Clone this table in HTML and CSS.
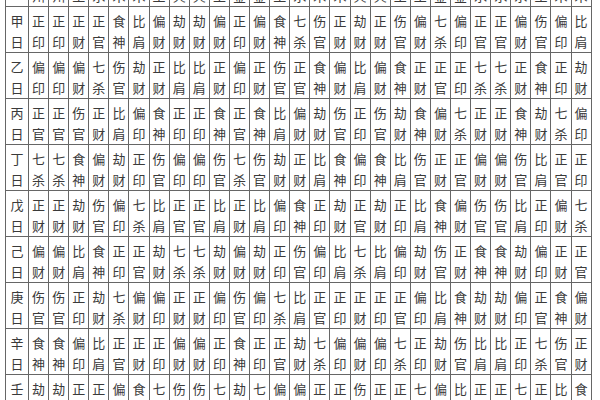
FILE: index.html
```html
<!DOCTYPE html>
<html lang="zh">
<head>
<meta charset="utf-8">
<link rel="stylesheet" href="styles.css">
</head>
<body>
<div class="t">
<div class="c h"></div>
<div class="c">月<br>州</div><div class="c">月<br>州</div><div class="c">丑<br>土</div><div class="c">子<br>水</div><div class="c">寅<br>木</div><div class="c">卯<br>木</div><div class="c">辰<br>土</div><div class="c">巳<br>火</div><div class="c">午<br>火</div><div class="c">未<br>土</div><div class="c">申<br>金</div><div class="c">酉<br>金</div><div class="c">戌<br>土</div><div class="c">亥<br>水</div><div class="c">甲<br>木</div><div class="c">乙<br>木</div><div class="c">丙<br>火</div><div class="c">丁<br>火</div><div class="c">戊<br>土</div><div class="c">己<br>土</div><div class="c">庚<br>金</div><div class="c">辛<br>金</div><div class="c">壬<br>水</div><div class="c">癸<br>水</div><div class="c">子<br>水</div><div class="c">丑<br>土</div><div class="c">寅<br>木</div><div class="c">卯<br>木</div>

<div class="c h">甲<br>日</div>
<div class="c">正<br>印</div><div class="c">正<br>印</div><div class="c">正<br>财</div><div class="c">正<br>官</div><div class="c">食<br>神</div><div class="c">比<br>肩</div><div class="c">偏<br>财</div><div class="c">劫<br>财</div><div class="c">劫<br>财</div><div class="c">偏<br>财</div><div class="c">正<br>印</div><div class="c">偏<br>财</div><div class="c">食<br>神</div><div class="c">七<br>杀</div><div class="c">伤<br>官</div><div class="c">正<br>财</div><div class="c">劫<br>财</div><div class="c">正<br>财</div><div class="c">伤<br>官</div><div class="c">偏<br>财</div><div class="c">七<br>杀</div><div class="c">偏<br>印</div><div class="c">正<br>官</div><div class="c">正<br>官</div><div class="c">偏<br>财</div><div class="c">伤<br>官</div><div class="c">偏<br>印</div><div class="c">比<br>肩</div>

<div class="c h">乙<br>日</div>
<div class="c">偏<br>印</div><div class="c">偏<br>印</div><div class="c">偏<br>财</div><div class="c">七<br>杀</div><div class="c">伤<br>官</div><div class="c">劫<br>财</div><div class="c">正<br>财</div><div class="c">比<br>肩</div><div class="c">比<br>肩</div><div class="c">正<br>财</div><div class="c">偏<br>印</div><div class="c">正<br>财</div><div class="c">伤<br>官</div><div class="c">正<br>官</div><div class="c">食<br>神</div><div class="c">偏<br>财</div><div class="c">比<br>肩</div><div class="c">偏<br>财</div><div class="c">食<br>神</div><div class="c">正<br>财</div><div class="c">正<br>官</div><div class="c">正<br>印</div><div class="c">七<br>杀</div><div class="c">七<br>杀</div><div class="c">正<br>财</div><div class="c">食<br>神</div><div class="c">正<br>印</div><div class="c">劫<br>财</div>

<div class="c h">丙<br>日</div>
<div class="c">正<br>官</div><div class="c">正<br>官</div><div class="c">伤<br>官</div><div class="c">正<br>财</div><div class="c">比<br>肩</div><div class="c">偏<br>印</div><div class="c">食<br>神</div><div class="c">正<br>印</div><div class="c">正<br>印</div><div class="c">食<br>神</div><div class="c">正<br>官</div><div class="c">食<br>神</div><div class="c">比<br>肩</div><div class="c">偏<br>财</div><div class="c">劫<br>财</div><div class="c">伤<br>官</div><div class="c">正<br>印</div><div class="c">伤<br>官</div><div class="c">劫<br>财</div><div class="c">食<br>神</div><div class="c">偏<br>财</div><div class="c">七<br>杀</div><div class="c">正<br>财</div><div class="c">正<br>财</div><div class="c">食<br>神</div><div class="c">劫<br>财</div><div class="c">七<br>杀</div><div class="c">偏<br>印</div>

<div class="c h">丁<br>日</div>
<div class="c">七<br>杀</div><div class="c">七<br>杀</div><div class="c">食<br>神</div><div class="c">偏<br>财</div><div class="c">劫<br>财</div><div class="c">正<br>印</div><div class="c">伤<br>官</div><div class="c">偏<br>印</div><div class="c">偏<br>印</div><div class="c">伤<br>官</div><div class="c">七<br>杀</div><div class="c">伤<br>官</div><div class="c">劫<br>财</div><div class="c">正<br>财</div><div class="c">比<br>肩</div><div class="c">食<br>神</div><div class="c">偏<br>印</div><div class="c">食<br>神</div><div class="c">比<br>肩</div><div class="c">伤<br>官</div><div class="c">正<br>财</div><div class="c">正<br>官</div><div class="c">偏<br>财</div><div class="c">偏<br>财</div><div class="c">伤<br>官</div><div class="c">比<br>肩</div><div class="c">正<br>官</div><div class="c">正<br>印</div>

<div class="c h">戊<br>日</div>
<div class="c">正<br>财</div><div class="c">正<br>财</div><div class="c">劫<br>财</div><div class="c">伤<br>官</div><div class="c">偏<br>印</div><div class="c">七<br>杀</div><div class="c">比<br>肩</div><div class="c">正<br>官</div><div class="c">正<br>官</div><div class="c">比<br>肩</div><div class="c">正<br>财</div><div class="c">比<br>肩</div><div class="c">偏<br>印</div><div class="c">食<br>神</div><div class="c">正<br>印</div><div class="c">劫<br>财</div><div class="c">正<br>官</div><div class="c">劫<br>财</div><div class="c">正<br>印</div><div class="c">比<br>肩</div><div class="c">食<br>神</div><div class="c">偏<br>财</div><div class="c">伤<br>官</div><div class="c">伤<br>官</div><div class="c">比<br>肩</div><div class="c">正<br>印</div><div class="c">偏<br>财</div><div class="c">七<br>杀</div>

<div class="c h">己<br>日</div>
<div class="c">偏<br>财</div><div class="c">偏<br>财</div><div class="c">比<br>肩</div><div class="c">食<br>神</div><div class="c">正<br>印</div><div class="c">正<br>官</div><div class="c">劫<br>财</div><div class="c">七<br>杀</div><div class="c">七<br>杀</div><div class="c">劫<br>财</div><div class="c">偏<br>财</div><div class="c">劫<br>财</div><div class="c">正<br>印</div><div class="c">伤<br>官</div><div class="c">偏<br>印</div><div class="c">比<br>肩</div><div class="c">七<br>杀</div><div class="c">比<br>肩</div><div class="c">偏<br>印</div><div class="c">劫<br>财</div><div class="c">伤<br>官</div><div class="c">正<br>财</div><div class="c">食<br>神</div><div class="c">食<br>神</div><div class="c">劫<br>财</div><div class="c">偏<br>印</div><div class="c">正<br>财</div><div class="c">正<br>官</div>

<div class="c h">庚<br>日</div>
<div class="c">伤<br>官</div><div class="c">伤<br>官</div><div class="c">正<br>印</div><div class="c">劫<br>财</div><div class="c">七<br>杀</div><div class="c">偏<br>财</div><div class="c">偏<br>印</div><div class="c">正<br>财</div><div class="c">正<br>财</div><div class="c">偏<br>印</div><div class="c">伤<br>官</div><div class="c">偏<br>印</div><div class="c">七<br>杀</div><div class="c">比<br>肩</div><div class="c">正<br>官</div><div class="c">正<br>印</div><div class="c">正<br>财</div><div class="c">正<br>印</div><div class="c">正<br>官</div><div class="c">偏<br>印</div><div class="c">比<br>肩</div><div class="c">食<br>神</div><div class="c">劫<br>财</div><div class="c">劫<br>财</div><div class="c">偏<br>印</div><div class="c">正<br>官</div><div class="c">食<br>神</div><div class="c">偏<br>财</div>

<div class="c h">辛<br>日</div>
<div class="c">食<br>神</div><div class="c">食<br>神</div><div class="c">偏<br>印</div><div class="c">比<br>肩</div><div class="c">正<br>官</div><div class="c">正<br>财</div><div class="c">正<br>印</div><div class="c">偏<br>财</div><div class="c">偏<br>财</div><div class="c">正<br>印</div><div class="c">食<br>神</div><div class="c">正<br>印</div><div class="c">正<br>官</div><div class="c">劫<br>财</div><div class="c">七<br>杀</div><div class="c">偏<br>印</div><div class="c">偏<br>财</div><div class="c">偏<br>印</div><div class="c">七<br>杀</div><div class="c">正<br>印</div><div class="c">劫<br>财</div><div class="c">伤<br>官</div><div class="c">比<br>肩</div><div class="c">比<br>肩</div><div class="c">正<br>印</div><div class="c">七<br>杀</div><div class="c">伤<br>官</div><div class="c">正<br>财</div>

<div class="c h">壬<br>日</div>
<div class="c">劫<br>财</div><div class="c">劫<br>财</div><div class="c">正<br>官</div><div class="c">正<br>财</div><div class="c">偏<br>印</div><div class="c">食<br>神</div><div class="c">七<br>杀</div><div class="c">伤<br>官</div><div class="c">伤<br>官</div><div class="c">七<br>杀</div><div class="c">劫<br>财</div><div class="c">七<br>杀</div><div class="c">偏<br>财</div><div class="c">偏<br>印</div><div class="c">正<br>官</div><div class="c">正<br>财</div><div class="c">伤<br>官</div><div class="c">正<br>印</div><div class="c">正<br>财</div><div class="c">七<br>杀</div><div class="c">偏<br>印</div><div class="c">比<br>肩</div><div class="c">正<br>官</div><div class="c">正<br>官</div><div class="c">七<br>杀</div><div class="c">正<br>财</div><div class="c">比<br>肩</div><div class="c">食<br>神</div>
</div>
</body>
</html>
```

FILE: styles.css
```css
html, body {
  margin: 0;
  padding: 0;
  background: #ffffff;
  overflow: hidden;
}

.t {
  display: grid;
  grid-template-columns: 23px repeat(28, 20.1px);
  grid-auto-rows: 46px;
  margin: -39px 0 0 5px;
  width: max-content;
  border-left: 1px solid #666666;
  font-family: "Noto Sans CJK SC", "Noto Sans", sans-serif;
  font-size: 13px;
  line-height: 21px;
  color: #3a3a3a;
}

.c {
  box-sizing: border-box;
  border-right: 1px solid #666666;
  border-bottom: 1px solid #666666;
  padding-top: 3px;
  text-align: center;
  overflow: hidden;
  white-space: nowrap;
}
```
